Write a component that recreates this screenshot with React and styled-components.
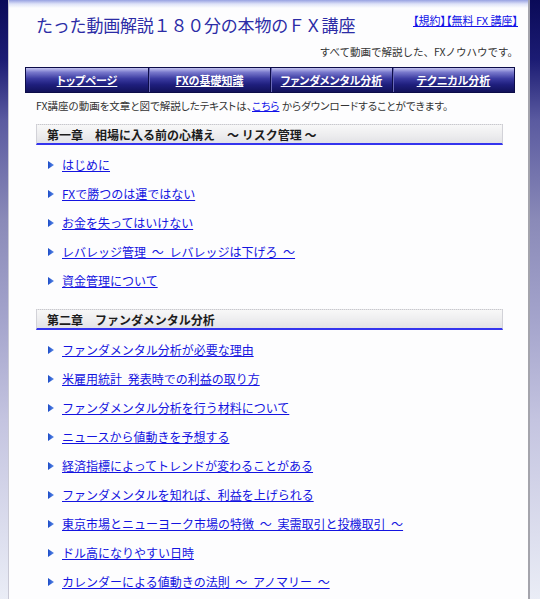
import styled, { createGlobalStyle } from "styled-components";

const GlobalStyle = createGlobalStyle`
    html, body {
        margin: 0;
        padding: 0;
    }

    body {
        background: linear-gradient(
            to bottom,
            #0a0a58 0px,
            #1c1c74 60px,
            #5a5aa0 120px,
            #8a8ab8 220px,
            #a4a4cc 320px,
            #c4c4e0 420px,
            #eaedf6 600px
        );
        min-height: 100vh;
        font-family: "Noto Sans CJK JP", "Noto Sans", sans-serif;
    }
`;

const Panel = styled.div`
    box-sizing: border-box;
    width: 522px;
    min-height: 599px;
    margin: 0 10px 0 8px;
    background: linear-gradient(to bottom, #98a2e2 0px, #dfe3f8 4px, #fdfdfe 8px);
    border-left: 1px solid #c8c8d4;
    border-right: 2px solid #a4a4ac;
`;

const Header = styled.header`
    display: flex;
    justify-content: space-between;
    align-items: flex-start;
    padding: 13px 10px 0 27px;
`;

const Title = styled.h1`
    margin: 1px 0 0;
    font-size: 17px;
    line-height: 22px;
    font-weight: normal;
    color: #2c2ca6;
    letter-spacing: -0.2px;
`;

const HeadLinks = styled.div`
    font-size: 11px;
    line-height: 14px;
    font-feature-settings: "palt";
    a {
        color: #1010e8;
        text-decoration: underline;
    }
`;

const Catch = styled.p`
    margin: 9px 0 0;
    padding-right: 10px;
    text-align: right;
    font-size: 10.5px;
    line-height: 14px;
    color: #333;
`;

const Nav = styled.nav`
    display: grid;
    grid-template-columns: repeat(4, 1fr);
    margin: 8px 13px 0 16px;
    border: 1px solid #0c0c48;
    background: linear-gradient(
        to bottom,
        #c4c4f0 0%,
        #7878cc 18%,
        #3a3aa0 45%,
        #1e1e7c 70%,
        #12125a 100%
    );
`;

const Tab = styled.a`
    display: flex;
    align-items: center;
    justify-content: center;
    height: 24px;
    color: #fff;
    font-size: 11px;
    font-weight: bold;
    text-decoration: underline;
    font-feature-settings: "palt";
    border-left: ${(props) => (props.$first ? "none" : "1px solid #0c0c48")};
    box-shadow: ${(props) => (props.$first ? "none" : "inset 1px 0 0 #6a6ab8")};
`;

const Intro = styled.p`
    margin: 6px 0 0 27px;
    font-size: 10.5px;
    line-height: 14px;
    color: #333;
    font-feature-settings: "palt";
    a {
        color: #1010e8;
    }
`;

const Chapter = styled.section`
    margin: ${(props) => (props.$first ? "11px" : "14px")} 25px 0 27px;
`;

const ChapterTitle = styled.h2`
    box-sizing: border-box;
    height: 21px;
    margin: 0;
    padding: 0 0 0 10px;
    display: flex;
    align-items: center;
    font-size: 12px;
    font-weight: bold;
    color: #1c1c1c;
    background: linear-gradient(to bottom, #f8f8f8, #ececee 60%, #e2e2e6);
    border: 1px solid #d2d2d8;
    border-top: 1px dotted #c8c8cc;
    border-bottom: 2px solid #3434ee;
    white-space: pre;
`;

const List = styled.ul`
    margin: 0;
    padding: 5px 0 0 12px;
    list-style: none;
`;

const Item = styled.li`
    display: flex;
    align-items: center;
    height: 29px;
    a {
        color: #1414e0;
        font-size: 12px;
        text-decoration: underline;
        word-spacing: 3px;
    }
`;

const Bullet = styled.svg`
    width: 6px;
    height: 8px;
    margin-right: 8px;
    flex-shrink: 0;
`;

function Arrow() {
    return (
        <Bullet viewBox="0 0 6 8" aria-hidden>
            <defs>
                <linearGradient id="bl" x1="0" y1="0" x2="1" y2="0">
                    <stop offset="0" stopColor="#1c4cc8" />
                    <stop offset="1" stopColor="#5a8ae8" />
                </linearGradient>
            </defs>
            <polygon points="0,0 6,4 0,8" fill="url(#bl)" />
        </Bullet>
    );
}

const tabs = ["トップページ", "FXの基礎知識", "ファンダメンタル分析", "テクニカル分析"];

const chapters = [
    {
        title: "第一章　相場に入る前の心構え　～ リスク管理 ～",
        items: [
            "はじめに",
            "FXで勝つのは運ではない",
            "お金を失ってはいけない",
            "レバレッジ管理 ～ レバレッジは下げろ ～",
            "資金管理について",
        ],
    },
    {
        title: "第二章　ファンダメンタル分析",
        items: [
            "ファンダメンタル分析が必要な理由",
            "米雇用統計 発表時での利益の取り方",
            "ファンダメンタル分析を行う材料について",
            "ニュースから値動きを予想する",
            "経済指標によってトレンドが変わることがある",
            "ファンダメンタルを知れば、利益を上げられる",
            "東京市場とニューヨーク市場の特徴 ～ 実需取引と投機取引 ～",
            "ドル高になりやすい日時",
            "カレンダーによる値動きの法則 ～ アノマリー ～",
        ],
    },
];

export default function App() {
    return (
        <>
            <GlobalStyle />
            <Panel>
                <Header>
                    <Title>たった動画解説１８０分の本物のＦＸ講座</Title>
                    <HeadLinks>
                        <a href="#">【規約】</a>
                        <a href="#">【無料 FX 講座】</a>
                    </HeadLinks>
                </Header>
                <Catch>すべて動画で解説した、FXノウハウです。</Catch>
                <Nav>
                    {tabs.map((t, i) => (
                        <Tab key={t} href="#" $first={i === 0}>
                            {t}
                        </Tab>
                    ))}
                </Nav>
                <Intro>
                    FX講座の動画を文章と図で解説したテキストは、<a href="#">こちら</a> からダウンロードすることができます。
                </Intro>
                {chapters.map((ch, i) => (
                    <Chapter key={ch.title} $first={i === 0}>
                        <ChapterTitle>{ch.title}</ChapterTitle>
                        <List>
                            {ch.items.map((it) => (
                                <Item key={it}>
                                    <Arrow />
                                    <a href="#">{it}</a>
                                </Item>
                            ))}
                        </List>
                    </Chapter>
                ))}
            </Panel>
        </>
    );
}
